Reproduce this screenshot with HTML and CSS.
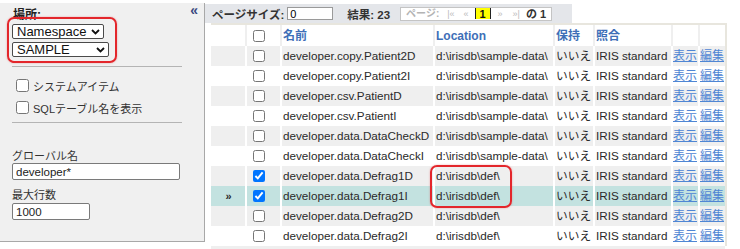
FILE: index.html
```html
<!DOCTYPE html>
<html lang="ja">
<head>
    <meta charset="UTF-8">
    <meta name="viewport" content="width=device-width, initial-scale=1.0">
    <title>Globals</title>
    <link rel="stylesheet" href="styles.css">
</head>
<body>
    <div class="page">
        <aside class="side">
            <div class="side-head">
                <span class="side-title">場所:</span>
                <span class="collapse">&laquo;</span>
            </div>
            <div class="sel sel-ns">
                <select><option>Namespace</option></select>
                <svg width="9" height="6" viewBox="0 0 9 6"><path d="M1 1 L4.5 4.5 L8 1" fill="none" stroke="#111" stroke-width="1.8"/></svg>
            </div>
            <div class="sel sel-db">
                <select><option>SAMPLE</option></select>
                <svg width="9" height="6" viewBox="0 0 9 6"><path d="M1 1 L4.5 4.5 L8 1" fill="none" stroke="#111" stroke-width="1.8"/></svg>
            </div>
            <div class="sep sep-1"></div>
            <label class="chk chk-1"><input type="checkbox"> システムアイテム</label>
            <label class="chk chk-2"><input type="checkbox"> SQLテーブル名を表示</label>
            <div class="sep sep-2"></div>
            <div class="field field-1">
                <label>グローバル名</label>
                <input class="txt txt-wide" value="developer*">
            </div>
            <div class="field field-2">
                <label>最大行数</label>
                <input class="txt txt-short" value="1000">
            </div>
        </aside>

        <main class="main">
            <div class="toolbar">
                <span>ページサイズ:</span>
                <input class="tb-input" value="0">
                <span class="tb-count">結果: 23</span>
                <div class="pager">
                    <span class="pg-label">ページ:</span>
                    <span class="pg-nav pg-first">|&laquo;</span>
                    <span class="pg-nav pg-prev">&laquo;</span>
                    <span class="pg-cur">1</span>
                    <span class="pg-nav pg-next">&raquo;</span>
                    <span class="pg-nav pg-last">&raquo;|</span>
                    <span class="pg-of">の 1</span>
                </div>
            </div>

            <table class="grid">
                <colgroup>
                    <col style="width:34px"><col style="width:35px"><col style="width:153px"><col style="width:120px">
                    <col style="width:40px"><col style="width:78px"><col style="width:27px"><col style="width:27px">
                </colgroup>
                <thead>
                    <tr>
                        <th></th>
                        <th class="cb"><input type="checkbox"></th>
                        <th>名前</th>
                        <th>Location</th>
                        <th>保持</th>
                        <th>照合</th>
                        <th></th>
                        <th></th>
                    </tr>
                </thead>
                <tbody>
                    <tr><td class="mark"></td><td class="cb"><input type="checkbox"></td><td>developer.copy.Patient2D</td><td>d:\irisdb\sample-data\</td><td>いいえ</td><td>IRIS standard</td><td class="lnk"><a href="#">表示</a></td><td class="lnk"><a href="#">編集</a></td></tr>
                    <tr><td class="mark"></td><td class="cb"><input type="checkbox"></td><td>developer.copy.Patient2I</td><td>d:\irisdb\sample-data\</td><td>いいえ</td><td>IRIS standard</td><td class="lnk"><a href="#">表示</a></td><td class="lnk"><a href="#">編集</a></td></tr>
                    <tr><td class="mark"></td><td class="cb"><input type="checkbox"></td><td>developer.csv.PatientD</td><td>d:\irisdb\sample-data\</td><td>いいえ</td><td>IRIS standard</td><td class="lnk"><a href="#">表示</a></td><td class="lnk"><a href="#">編集</a></td></tr>
                    <tr><td class="mark"></td><td class="cb"><input type="checkbox"></td><td>developer.csv.PatientI</td><td>d:\irisdb\sample-data\</td><td>いいえ</td><td>IRIS standard</td><td class="lnk"><a href="#">表示</a></td><td class="lnk"><a href="#">編集</a></td></tr>
                    <tr><td class="mark"></td><td class="cb"><input type="checkbox"></td><td>developer.data.DataCheckD</td><td>d:\irisdb\sample-data\</td><td>いいえ</td><td>IRIS standard</td><td class="lnk"><a href="#">表示</a></td><td class="lnk"><a href="#">編集</a></td></tr>
                    <tr><td class="mark"></td><td class="cb"><input type="checkbox"></td><td>developer.data.DataCheckI</td><td>d:\irisdb\sample-data\</td><td>いいえ</td><td>IRIS standard</td><td class="lnk"><a href="#">表示</a></td><td class="lnk"><a href="#">編集</a></td></tr>
                    <tr><td class="mark"></td><td class="cb"><input type="checkbox" checked></td><td>developer.data.Defrag1D</td><td>d:\irisdb\def\</td><td>いいえ</td><td>IRIS standard</td><td class="lnk"><a href="#">表示</a></td><td class="lnk"><a href="#">編集</a></td></tr>
                    <tr class="current"><td class="mark">&raquo;</td><td class="cb"><input type="checkbox" checked></td><td>developer.data.Defrag1I</td><td>d:\irisdb\def\</td><td>いいえ</td><td>IRIS standard</td><td class="lnk"><a href="#">表示</a></td><td class="lnk"><a href="#">編集</a></td></tr>
                    <tr><td class="mark"></td><td class="cb"><input type="checkbox"></td><td>developer.data.Defrag2D</td><td>d:\irisdb\def\</td><td>いいえ</td><td>IRIS standard</td><td class="lnk"><a href="#">表示</a></td><td class="lnk"><a href="#">編集</a></td></tr>
                    <tr><td class="mark"></td><td class="cb"><input type="checkbox"></td><td>developer.data.Defrag2I</td><td>d:\irisdb\def\</td><td>いいえ</td><td>IRIS standard</td><td class="lnk"><a href="#">表示</a></td><td class="lnk"><a href="#">編集</a></td></tr>
                </tbody>
            </table>
            <div class="grid-foot"></div>
        </main>

        <!-- red annotation frames -->
        <div class="note note-select"></div>
        <div class="note note-location"></div>
    </div>
</body>
</html>
```

FILE: styles.css
```css
body {
    margin: 0;
    font-family: "Liberation Sans", "Noto Sans CJK JP", sans-serif;
    color: #333;
    background: #fff;
    overflow: hidden;
}

.page {
    position: relative;
    display: flex;
    align-items: flex-start;
    padding-top: 3px;
}

/* left panel */
.side {
    box-sizing: border-box;
    flex: none;
    width: 205px;
    height: 239px;
    padding: 6px 0 0 12px;
    background: #f0f0f0;
    border-right: 1px solid #a8a8a8;
    border-bottom: 1px solid #a8a8a8;
}

.side-head {
    display: flex;
    justify-content: space-between;
    align-items: flex-start;
    padding-right: 6px;
}

.side-title {
    margin-left: 1px;
    font-size: 12px;
    font-weight: bold;
    line-height: 12px;
    color: #222;
}

.collapse {
    margin-top: -4px;
    font-size: 14px;
    font-weight: bold;
    line-height: 10px;
    color: #3b4a80;
}

.sel {
    position: relative;
    margin-top: 3px;
    height: 15px;
}

.sel-ns {
    width: 92px;
}

.sel-db {
    width: 97px;
}

.sel select {
    appearance: none;
    display: block;
    box-sizing: border-box;
    width: 100%;
    height: 15px;
    padding: 0 0 0 4px;
    border: 1px solid #4a4a4a;
    border-radius: 2px;
    background: #fff;
    font-family: "Liberation Sans", sans-serif;
    font-size: 13px;
    line-height: 13px;
    color: #111;
}

.sel svg {
    position: absolute;
    top: 5px;
    right: 4px;
}

.sep {
    width: 170px;
    height: 1px;
    background: #b4b4b4;
}

.sep-1 {
    margin-top: 9px;
}

.sep-2 {
    margin-top: 8px;
}

.chk {
    display: flex;
    align-items: center;
    gap: 4px;
    height: 13px;
    margin-left: 4px;
    font-size: 11px;
    color: #333;
}

.chk input {
    width: 13px;
    height: 13px;
    margin: 0;
}

.chk-1 {
    margin-top: 12px;
}

.chk-2 {
    margin-top: 9px;
}

.field label {
    display: block;
    font-size: 11px;
    line-height: 13px;
    color: #333;
}

.field-1 {
    margin-top: 27px;
}

.field-2 {
    margin-top: 9px;
}

.txt {
    display: block;
    box-sizing: border-box;
    height: 17px;
    padding: 0 3px;
    border: 1px solid #7a7a7a;
    border-radius: 2px;
    background: #fff;
    font-family: "Liberation Sans", sans-serif;
    font-size: 11.5px;
    color: #222;
}

.txt-wide {
    width: 168px;
}

.txt-short {
    width: 78px;
    margin-top: 1px;
}

/* right side */
.main {
    flex: 1;
    padding-top: 1px;
}

.toolbar {
    display: flex;
    align-items: center;
    box-sizing: border-box;
    width: 367px;
    height: 19px;
    padding-left: 7px;
    background: #e4e6ea;
    font-size: 11.5px;
    font-weight: bold;
    color: #333;
    white-space: nowrap;
}

.toolbar > * {
    flex: none;
}

.tb-input {
    box-sizing: border-box;
    width: 46px;
    height: 13px;
    margin-left: 3px;
    padding: 0 2px;
    border: 1px solid #9a9a9a;
    font-family: "Liberation Sans", sans-serif;
    font-size: 11px;
    font-weight: normal;
}

.tb-count {
    margin-left: 14px;
}

.pager {
    display: flex;
    align-items: center;
    box-sizing: border-box;
    width: 152px;
    height: 14px;
    margin-left: 10px;
    padding-left: 5px;
    background: #fff;
    border: 1px solid #c4c4c4;
    overflow: hidden;
}

.pager > span {
    flex: none;
    line-height: 12px;
}

.pg-label {
    font-size: 10px;
    color: #b4b4b4;
}

.pg-nav {
    font-size: 9px;
    font-weight: normal;
    color: #bbb;
}

.pg-first {
    margin-left: 8px;
}

.pg-prev {
    margin-left: 9px;
}

.pg-cur {
    width: 14px;
    height: 11px;
    margin-left: 6px;
    background: #ff0;
    border-left: 1px solid #222;
    border-right: 1px solid #222;
    text-align: center;
    font-size: 11px;
    color: #111;
}

.pg-next {
    margin-left: 7px;
}

.pg-last {
    margin-left: 10px;
}

.pg-of {
    margin-left: 6px;
    font-size: 11px;
    color: #333;
}

.grid {
    margin-left: 6px;
    width: 516px;
    table-layout: fixed;
    border-collapse: separate;
    border-spacing: 0;
    border-top: 2px solid #e8e6de;
    border-right: 2px solid #e8e6de;
    font-size: 11.7px;
}

.grid th,
.grid td {
    padding: 0 0 0 1px;
    border-left: 2px solid #fff;
    white-space: nowrap;
    overflow: hidden;
    text-align: left;
    line-height: 14px;
}

.grid th:first-child,
.grid td:first-child {
    border-left: 0;
}

.grid thead th {
    height: 21px;
    background: #fff;
    border-left-color: #efefef;
    color: #3e6fb7;
    font-size: 12px;
    font-weight: bold;
}

.grid tbody td {
    height: 20px;
    color: #2a2a2a;
}

.grid tbody tr:nth-child(odd) td {
    background: #efefef;
}

.grid tbody tr.current td {
    background: #c3e2e0;
}

.grid .cb {
    padding-left: 6px;
}

.grid .cb input {
    display: block;
    width: 12px;
    height: 12px;
    margin: 0;
}

.grid .mark {
    text-align: center;
    font-size: 11px;
    font-weight: bold;
}

.grid .lnk {
    padding-left: 0;
}

.grid a {
    color: #4f86d4;
    text-decoration: underline;
    font-size: 12px;
}

.grid-foot {
    width: 514px;
    height: 3px;
    margin-left: 6px;
    background: #efefef;
}

/* red annotation frames */
.note {
    position: absolute;
    box-sizing: border-box;
    border: 2px solid #e3262b;
    border-radius: 7px;
    box-shadow: 0 0 2px rgba(227, 38, 43, 0.4);
}

.note-select {
    left: 7px;
    top: 17px;
    width: 110px;
    height: 46px;
}

.note-location {
    left: 430px;
    top: 165px;
    width: 82px;
    height: 43px;
}
```
